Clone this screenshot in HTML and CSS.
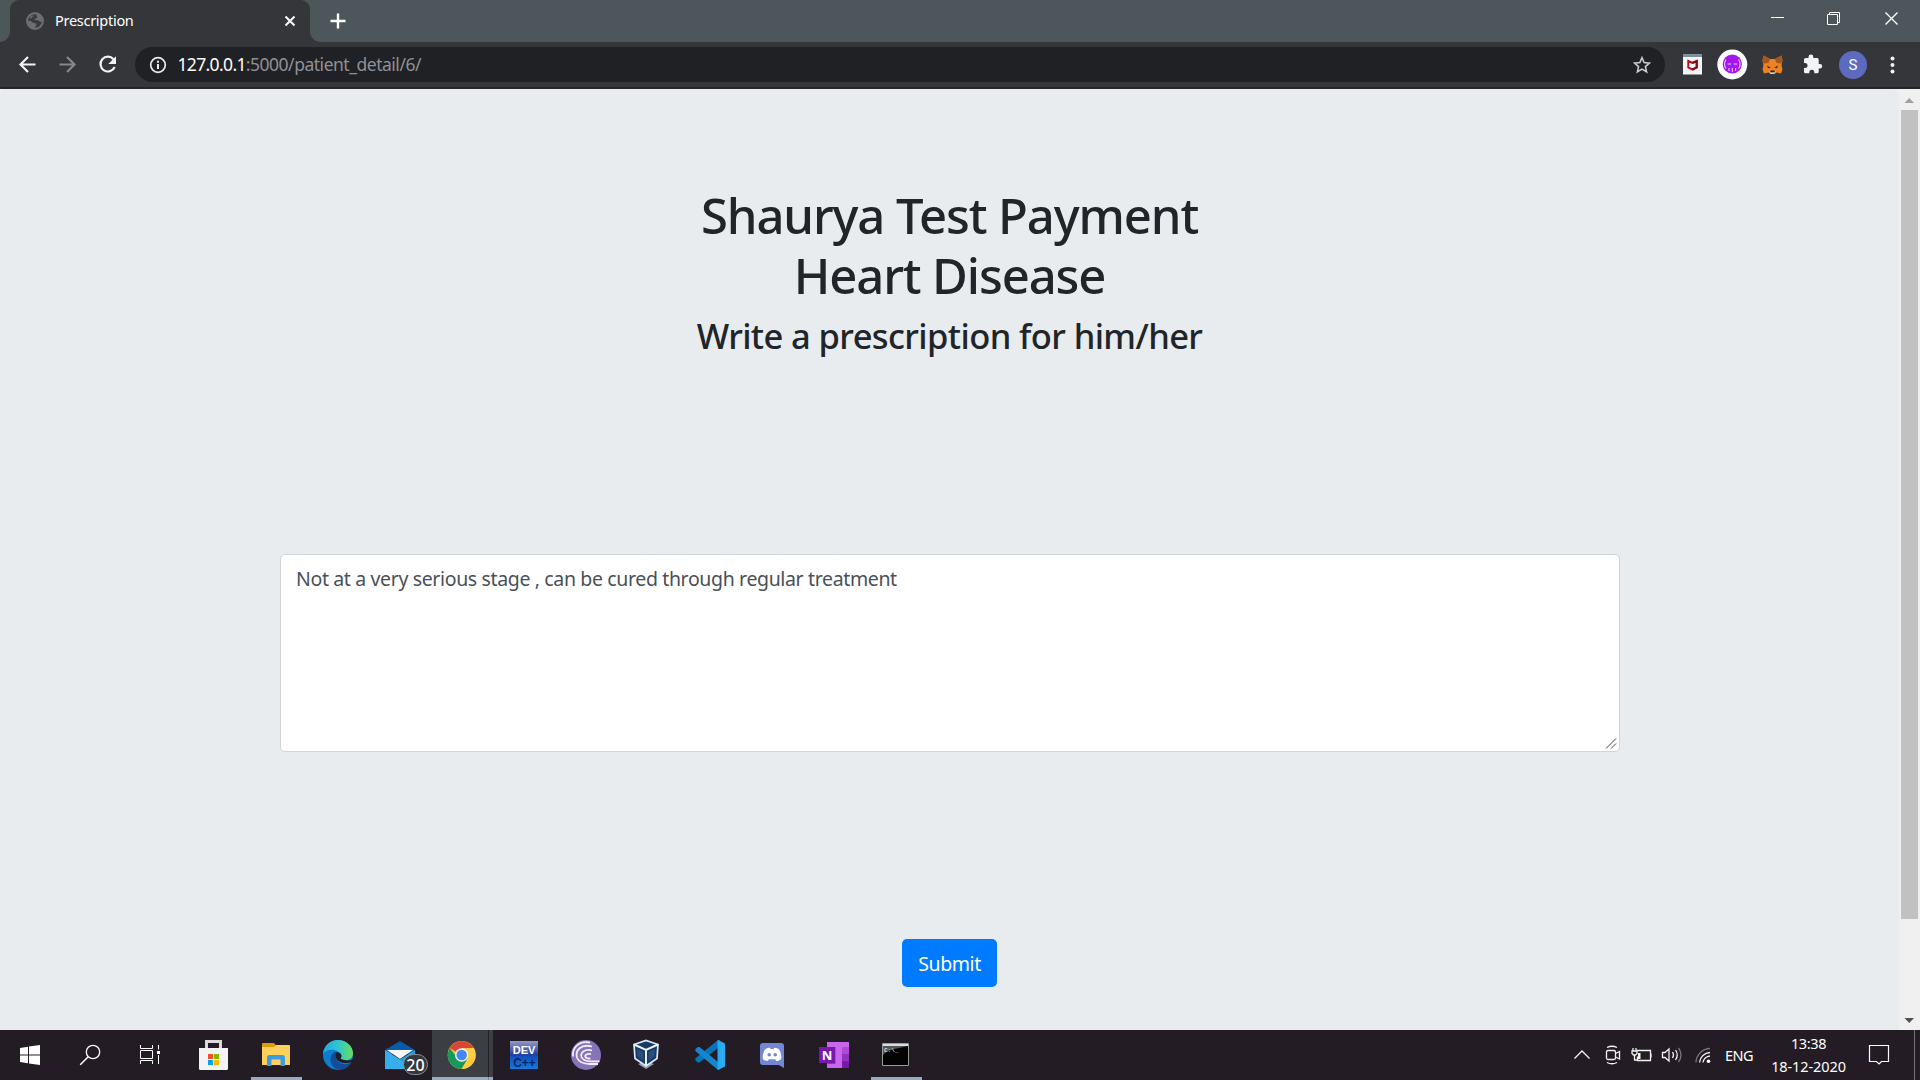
FILE: index.html
```html
<!DOCTYPE html>
<html lang="en">
<head>
<meta charset="utf-8">
<title>Prescription</title>
<link rel="stylesheet" href="styles.css">
</head>
<body>
<div class="desktop">
  <header class="tabstrip">
    <div class="tab">
      <svg class="globe" viewBox="0 0 18 18"><circle cx="9" cy="9" r="9" fill="#6a6d71"/><path d="M10.500 2.200C9.500 3.500 11.500 4 11 5.500S8.500 6 8.500 7.200s1.500 1 3.200 1c1.500 0 1.300 1.600 2.800 1.600h1.300c-.5 3.200-3.300 6-6.500 6v-1.600c1.200-.2 1.700-1.400.6-2.600-1-1-3.600-.4-4.300-1.800C5 8.500 3 8.600 2.200 9 2.200 5.500 5 2 10.500 2.200z" fill="#393a3e"/><path d="M4 6.500c1 .2 1.800-.2 2-1s1.500-.8 1.600-1.800L6 3.500 4.200 5z" fill="#6a6d71"/></svg>
      <span class="tab-title">Prescription</span>
      <svg class="tab-close" viewBox="0 0 12 12"><path d="M1.500 1.500l9 9m0-9l-9 9" stroke="#fff" stroke-width="2"/></svg>
    </div>
    <svg class="plus" viewBox="0 0 16 16"><path d="M8 .5v15M.5 8h15" stroke="#fff" stroke-width="2.400"/></svg>
    <svg class="window-controls" viewBox="1750 0 170 42" fill="none" stroke="#fff"><path d="M1771 17.500h13M1827.500 14.500h10v10h-10zM1829.500 14v-1.500h10v10H1838"/><path d="M1885.500 12.500l12 12m0-12l-12 12" stroke-width="1.400"/></svg>
  </header>

  <nav class="toolbar">
    <svg class="nav-icons" viewBox="0 42 135 45" fill="none" stroke-width="2.200">
      <path d="M35.500 64.500H20.500M28 57l-7.500 7.500L28 72" stroke="#f1f3f4"/>
      <path d="M59.500 64.500H74.500M67 57l7.500 7.500L67 72" stroke="#85878a"/>
      <path d="M113.500 59.200A7.400 7.400 0 1 0 114.700 67" stroke="#f1f3f4"/><path d="M116 56.300v7.700h-7.700z" fill="#f1f3f4"/>
    </svg>
    <div class="omnibox">
      <svg class="info" viewBox="0 0 18 18"><circle cx="9" cy="9" r="7.300" fill="none" stroke="#e8eaed" stroke-width="1.700"/><path d="M9 8v5M9 4.800v1.900" stroke="#e8eaed" stroke-width="2"/></svg>
      <span class="url"><span class="host">127.0.0.1</span><span class="path">:5000/patient_detail/6/</span></span>
      <svg class="star" viewBox="0 0 18 18"><path d="M9 1.700l2.150 4.900 5.250.5-3.950 3.500 1.150 5.200L9 13.100l-4.600 2.700 1.150-5.200L1.600 7.100l5.250-.5z" fill="none" stroke="#c9cbce" stroke-width="1.600"/></svg>
    </div>
    <svg class="extensions" viewBox="1665 42 255 45">
      <rect x="1683" y="54.500" width="19" height="20" fill="#f5f5f5"/><path d="M1683 54.500h19v2.500h-19z" fill="#78909c"/>
      <path d="M1688.300 61l4.200 2 4.200-2v6.500l-4.200 2.200-4.200-2.200z" fill="none" stroke="#c00d18" stroke-width="2"/><path d="M1692.500 63l4.200-2v6.500l-4.200 2.200" fill="none" stroke="#7f0915" stroke-width="2"/>
      <circle cx="1732.300" cy="64.500" r="15" fill="#fff"/><circle cx="1732.300" cy="64" r="9.600" fill="#a615ec"/>
      <path d="M1726 59.500q-3 5 0 9M1738.600 59.500q3 5 0 9M1727.500 64h3.500m2.600 0h3.500M1729 68v3m3.300-3v4m3.300-4v3" stroke="#e8c4ff" stroke-width="1.100" fill="none"/>
      <path d="M1763.500 55.500l6.500 3.500h5l6.500-3.500 1 5-1 5 1 4-1.500 4-4.500-1-2 1.500h-4l-2-1.500-4.500 1-1.500-4 1-4-1-5z" fill="#f0811f"/>
      <path d="M1763.500 55.500l6.500 3.800-1.500 3.700-5 .5-1-3zM1781.500 55.500l-6.500 3.800 1.500 3.700 5 .5 1-3z" fill="#a4581f"/>
      <path d="M1767 65.500l4 2.200-3 .6zM1778 65.500l-4 2.200 3 .6z" fill="#283447"/><path d="M1769 71h7l-1.500 3h-4z" fill="#d8c5ae"/><path d="M1770.500 70.500h4l.5 1.800h-5z" fill="#222"/>
      <path d="M1820 64h-1.300v-4.300a1.600 1.600 0 0 0-1.600-1.600h-3.800V57a2.400 2.400 0 0 0-4.800 0v1.100h-2.900a1.600 1.600 0 0 0-1.600 1.600v3.300h1a2.500 2.500 0 0 1 0 5h-1v3.700a1.600 1.600 0 0 0 1.600 1.600h3.700v-1a2.500 2.500 0 0 1 5 0v1h2.800a1.600 1.600 0 0 0 1.600-1.600v-3.300h1.300a2.200 2.200 0 0 0 0-4.400z" fill="#f1f3f4"/>
      <circle cx="1853" cy="65" r="14" fill="#5c6bc0"/><text x="1853" y="70.300" class="avatar-letter">S</text>
      <g fill="#f1f3f4"><circle cx="1892.500" cy="58.500" r="2"/><circle cx="1892.500" cy="65" r="2"/><circle cx="1892.500" cy="71.500" r="2"/></g>
    </svg>
  </nav>

  <div class="viewport">
    <main class="page">
      <h1>Shaurya Test Payment</h1>
      <h1>Heart Disease</h1>
      <h3>Write a prescription for him/her</h3>
      <div class="note">
        <span class="note-text">Not at a very serious stage , can be cured through regular treatment</span>
        <svg class="grip" viewBox="0 0 12 12"><path d="M1 11.500l10-10M6 11.500l5-5" stroke="#444"/></svg>
      </div>
      <button class="submit">Submit</button>
    </main>
    <aside class="scrollbar">
      <svg class="arrow" viewBox="0 0 21 21"><path d="M5.500 14h9.500l-4.750-5z" fill="#a0a0a0"/></svg>
      <div class="thumb"></div>
      <svg class="arrow" viewBox="0 0 21 21"><path d="M5.500 9h9.500l-4.750 5z" fill="#505050"/></svg>
    </aside>
  </div>

  <footer class="taskbar">
    <svg class="sys" viewBox="0 1030 182 50" fill="none" stroke="#fff">
      <path d="M20 1048l8-1.200v7.700h-8zM29 1046.600l11-1.600v9.500H29zM20 1055.500h8v7.700l-8-1.200zM29 1055.500h11v9.500l-11-1.600z" fill="#fff" stroke="none"/>
      <circle cx="93" cy="1052" r="6.700" stroke-width="1.300"/><path d="M88.200 1056.800l-8 8" stroke-width="1.500"/>
      <path d="M140.500 1045v3.500h12V1045M140.500 1064v-3.500h12v3.500M140.500 1050.500h12v8h-12zM158.500 1045v4.500M158.500 1055v9"/><path d="M157 1051h3v3h-3z" fill="#fff" stroke="none"/>
    </svg>
    <svg class="app" viewBox="182 1030 62 50">
      <path d="M206.500 1050v-8.500h14v8.500" fill="none" stroke="#ddd9dc" stroke-width="3"/><path d="M199 1048h29v20.500a1.500 1.500 0 0 1-1.500 1.500h-26a1.500 1.500 0 0 1-1.500-1.500z" fill="#f3f3f3"/>
      <path d="M208 1054h5v5h-5z" fill="#f25022"/><path d="M214 1054h5v5h-5z" fill="#7fba00"/><path d="M208 1060h5v5h-5z" fill="#00a4ef"/><path d="M214 1060h5v5h-5z" fill="#ffb900"/>
    </svg>
    <svg class="app" viewBox="244 1030 62 50">
      <path d="M262 1044a1 1 0 0 1 1-1h11l2 2.500v5h-14z" fill="#dc9a0c"/><path d="M262 1047h12l2-2h13a1 1 0 0 1 1 1v19h-28z" fill="#ffd15c"/>
      <path d="M267 1065.500v-8a2.500 2.500 0 0 1 2.500-2.500h13a2.500 2.500 0 0 1 2.500 2.500v8.500h-4.500v-6.500h-9v6.500H267z" fill="#3d9be0"/><path d="M251 1077h51v3h-51z" fill="#9aabbd"/>
    </svg>
    <svg class="app" viewBox="306 1030 62 50">
      <defs><linearGradient id="edgeTop"><stop offset="0" stop-color="#24a8dc"/><stop offset=".5" stop-color="#32c4d0"/><stop offset="1" stop-color="#68df5b"/></linearGradient></defs>
      <circle cx="338" cy="1055" r="15" fill="#0b7ed0"/>
      <path d="M323 1054C323.500 1046 330 1040 338 1040s15 6 15 13c0 5-3.500 7.300-7.500 7.300-3 0-5.200-1-4.600-2.300 1.400-2 .6-5-2.600-6.300-5-3.200-12-2.200-15.300 2.300z" fill="url(#edgeTop)"/>
      <path d="M335 1051.700c-6 3.300-6.500 12 0 16.500 6 3.700 13 .5 16.500-6.200-6 4.500-14 1.500-15.500-4-.6-2.500.5-4.600 2-5.600z" fill="#104c98"/>
      <path d="M337 1052c-2 2.500-2 6 1 8.500 4 3.300 10 3 14 1.200.8-.4 1.300.2.500 1.200 2-1 3-4 1.500-4.500-3 2.300-8 2.600-12.500.9-1.200-.5-.7-1.500-.3-2 1-2-.5-4.500-4.200-5.300z" fill="#241c24"/>
    </svg>
    <svg class="app" viewBox="368 1030 62 50">
      <path d="M385 1050l15-9 15 9v4h-30z" fill="#075bab"/><path d="M387 1050h26l-13 9z" fill="#f5f5f5"/><path d="M385 1050l15 9.500 15-9.500v19h-30z" fill="#229ee4"/><path d="M385 1050l29 19h-29z" fill="#35aeea"/>
      <rect x="403.500" y="1054.500" width="24" height="20" rx="10" fill="#32383d" stroke="#8e9193"/><text x="415.500" y="1070.500" class="badge">20</text>
    </svg>
    <svg class="app active" viewBox="430 1030 63 50">
      <path d="M432 1030h56v50h-56z" fill="#3b3f43"/><path d="M488 1030h1v50h-1z" fill="#202226"/><path d="M489 1030h4v50h-4z" fill="#3b3f43"/><path d="M432 1077h61v3h-61z" fill="#9aabbd"/><path d="M488 1077h1v3h-1z" fill="#778695"/>
      <circle cx="461.700" cy="1055" r="14" fill="#fbc934"/><path d="M461.700 1055l-12.100-7A14 14 0 0 1 473.800 1048z" fill="#db4437"/><path d="M449.600 1048a14 14 0 0 0 12.100 21l6.100-10.500-10.500-1z" fill="#16995a"/><path d="M461.700 1048h12.100a14 14 0 0 1-12.100 21l6.100-10.500z" fill="#ffcd42"/><circle cx="461.700" cy="1055" r="6.700" fill="#f1f1f1"/><circle cx="461.700" cy="1055" r="5.200" fill="#4285f4"/>
    </svg>
    <svg class="app" viewBox="493 1030 62 50">
      <defs><linearGradient id="devBg" x2="0" y2="1"><stop stop-color="#9298ca"/><stop offset=".5" stop-color="#243c9d"/><stop offset=".55" stop-color="#1450bd"/><stop offset="1" stop-color="#147bdc"/></linearGradient></defs>
      <path d="M510 1041h28v28h-28z" fill="url(#devBg)"/><text x="524" y="1053.500" class="dev">DEV</text><text x="524.500" y="1067" class="cpp">C++</text>
    </svg>
    <svg class="app" viewBox="555 1030 62 50">
      <circle cx="586" cy="1055" r="15" fill="#8574b8"/><g fill="none" stroke="#f2edfa" stroke-width="1.800"><path d="M592 1046.500c-11-3-17 4-15 11 2 5 7 6.500 13 6.500h8"/><path d="M592 1050.500c-7-2-12 2-10.500 6.500 1.500 3.500 5 4.300 9 4.300h9"/><path d="M591 1054c-4-.8-6.500 1-5.500 3 1 1.600 3 1.600 5 1.600"/><path d="M590 1042.500c-11-2-18 5-17 14"/></g>
    </svg>
    <svg class="app" viewBox="617 1030 62 50">
      <path d="M638 1064l8 5 8-5-8-3z" fill="#8c9db5"/><path d="M634 1044.500l12-4 12 4-1 14-11 7.500-11-7.500z" fill="#173a66" stroke="#dce8f3" stroke-width="1.700"/><path d="M634 1044.500l12 5.500 12-5.500M646 1050v15" fill="none" stroke="#edf5fb" stroke-width="2"/><path d="M637 1049l6.500 3v8.500l-6-4zM655 1049l-6.500 3v8.500l6-4z" fill="#274f80"/>
    </svg>
    <svg class="app" viewBox="679 1030 62 50">
      <path d="M718 1040l7 3.500v23l-7 3.500z" fill="#28adf3"/><path d="M718 1040v8l-18.500 14.500-1.700.1-2.500-2.300v-1.700z" fill="#0874b9"/><path d="M718 1070v-8l-18.500-15-1.700-.1-2.500 2.300v1.700z" fill="#1287cf"/><path d="M717.500 1040.500l2-.5v29.500h-2z" fill="#26a7ef"/>
    </svg>
    <svg class="app" viewBox="741 1030 62 50">
      <path d="M763 1043h18a3 3 0 0 1 3 3v22l-5-3h-16a3 3 0 0 1-3-3v-16a3 3 0 0 1 3-3z" fill="#7288d4"/><path d="M765 1049.500c2-1.600 4-1.800 5-1.800l.6 1.200h3l.6-1.200c2 0 4 .7 5 1.800 2 3.500 2.500 7 2 9.500-2 1.800-3.500 2-5 2l-1-1.700h-6.400l-1 1.700c-2 0-4-.8-5-2-.4-3 .5-7 2.200-9.500z" fill="#fff"/><circle cx="769.200" cy="1054.800" r="1.800" fill="#7288d4"/><circle cx="775.200" cy="1054.800" r="1.800" fill="#7288d4"/>
    </svg>
    <svg class="app" viewBox="803 1030 62 50">
      <path d="M827 1042h22v26h-22z" fill="#ca65ed"/><path d="M842 1047h7v7h-7z" fill="#ae4bd5"/><path d="M842 1054h7v7h-7z" fill="#9332bf"/><path d="M842 1061h7v7h-7z" fill="#7719aa"/><path d="M827 1047h8.500v17H827z" fill="#8f39b0"/><path d="M819 1047h16v16h-16z" fill="#7719aa"/><text x="827" y="1059.700" class="onenote">N</text>
    </svg>
    <svg class="app" viewBox="865 1030 62 50">
      <path d="M882.500 1043.500h26v22h-26z" fill="#030303" stroke="#9b9b9b"/><path d="M883 1044h25v2h-25z" fill="#d8dce0"/><path d="M883 1046h25c-8 2-20 3-25 9z" fill="#555"/><text x="884" y="1052" class="prompt">C:\_</text><path d="M871 1077h51v3h-51z" fill="#9aabbd"/>
    </svg>
    <svg class="tray-icons" viewBox="1564 1030 156 50" fill="none" stroke="#f2f2f2" stroke-width="1.300">
      <path d="M1574.500 1058.500l7.500-7.500 7.500 7.500"/>
      <rect x="1606.500" y="1050.500" width="9" height="9" rx="1.500"/><path d="M1615.500 1053.500l4-2v7.500l-4-2M1607 1047.500q5-2.500 10 0M1607 1062.500q5 2.500 10 0"/>
      <path d="M1637 1050.500h13.500v10h-13v-4M1651 1053.500v4"/><path d="M1638 1053h2.500v6h-2.500z" fill="#f2f2f2" stroke="none"/><path d="M1633 1048v3m3-3v3M1632 1051h5v2.500l-1.500 1.500h-2l-1.500-1.500zM1634.500 1055v5h3"/>
      <path d="M1662.500 1052.500h2.500l4-3.500v12l-4-3.500h-2.500zM1672.500 1052q2 3 0 6M1675.500 1050q3.500 5 0 10"/><path d="M1678.500 1048q5 7 0 14" stroke="#777"/>
      <path d="M1696 1062.500A14.500 14.500 0 0 1 1710 1048.500" stroke="#77727a"/><path d="M1699.500 1062.500A11 11 0 0 1 1710 1052.500M1703 1062.500A7.500 7.500 0 0 1 1710 1056"/><circle cx="1708.500" cy="1061.300" r="1.800" fill="#fff" stroke="none"/>
    </svg>
    <span class="lang">ENG</span>
    <div class="clock"><span class="time">13:38</span><span>18-12-2020</span></div>
    <svg class="notifications" viewBox="1859 1030 61 50" fill="none"><path d="M1869.500 1045.500h19v16h-7l-2.500 2.500-2.500-2.500h-7z" stroke="#fff" stroke-width="1.200"/><path d="M1914.500 1030v50" stroke="#777378"/></svg>
  </footer>
</div>
</body>
</html>
```
FILE: styles.css
```css
* { box-sizing: border-box; }
body { margin: 0; overflow: hidden; font-family: "Noto Sans", "Open Sans", sans-serif; }
svg { display: block; flex: none; }
.desktop { width: 1920px; height: 1080px; display: flex; flex-direction: column; }

.tabstrip { height: 42px; flex: none; background: #4d565b; display: flex; align-items: center; padding-left: 10px; }
.tab { position: relative; width: 300px; height: 42px; border-radius: 9px 9px 0 0; background: #35363a; display: flex; align-items: center; padding: 0 14px 0 16px; }
.tab::before, .tab::after { content: ""; position: absolute; bottom: 0; width: 10px; height: 10px; }
.tab::before { left: -10px; background: radial-gradient(circle at 0 0, transparent 9.5px, #35363a 10px); }
.tab::after { right: -10px; background: radial-gradient(circle at 100% 0, transparent 9.5px, #35363a 10px); }
.globe { width: 18px; height: 18px; }
.tab-title { flex: 1; margin-left: 11px; padding-bottom: 2px; font-size: 14.5px; line-height: 20px; letter-spacing: -.28px; color: #fff; }
.tab-close { width: 12px; height: 12px; }
.plus { width: 16px; height: 16px; margin-left: 19.5px; }
.window-controls { width: 170px; height: 42px; margin-left: auto; }

.toolbar { height: 47px; flex: none; background: #35363a; border-bottom: 2px solid #252628; display: flex; }
.nav-icons { width: 135px; height: 45px; }
.omnibox { width: 1530px; height: 35px; margin-top: 5px; border-radius: 18px; background: #202124; display: flex; align-items: center; padding: 0 14px 0 13.5px; }
.info { width: 18px; height: 18px; }
.url { flex: 1; margin-left: 11px; padding-bottom: 1px; font-size: 17.5px; line-height: 24px; }
.host { color: #fff; letter-spacing: -.65px; }
.path { color: #8e9195; letter-spacing: -.48px; }
.star { width: 18px; height: 18px; }
.extensions { width: 255px; height: 45px; }
.avatar-letter { font: 15px Roboto, sans-serif; fill: #fff; text-anchor: middle; }

.viewport { height: 941px; flex: none; display: flex; background: #f0f0f0; }
.page { width: 1899px; background: #e8ecef; border-radius: 6px 6px 0 0; padding-top: 96px; display: flex; flex-direction: column; align-items: center; color: #212529; }
h1, h3 { margin: 0; font-weight: 500; white-space: nowrap; }
h1 { font-size: 49px; line-height: 60px; letter-spacing: -1.1px; }
h3 { font-size: 34.5px; line-height: 42px; margin-top: 10px; letter-spacing: -.6px; }
.note { width: 1340px; height: 198px; margin-top: 197px; background: #fff; border: 1px solid #ced4da; border-radius: 5px; padding: 9px 2px 2px 15.5px; display: flex; justify-content: space-between; color: #495057; }
.note-text { font-size: 19.5px; line-height: 30px; letter-spacing: -.36px; white-space: nowrap; }
.grip { width: 12px; height: 12px; align-self: flex-end; }
.submit { width: 95px; height: 48px; margin-top: 187px; padding: 2px 0 0; border: 0; border-radius: 5px; background: #007bff; color: #fff; font: 19.5px/30px "Noto Sans", sans-serif; letter-spacing: -.4px; }
.scrollbar { width: 21px; display: flex; flex-direction: column; justify-content: space-between; }
.arrow { width: 21px; height: 21px; }
.thumb { width: 17px; height: 809px; margin: 0 2px auto; background: #c1c1c1; }

.taskbar { height: 50px; flex: none; display: flex; background: #241c24; color: #fff; }
.sys { width: 182px; height: 50px; }
.app { width: 62px; height: 50px; }
.active { width: 63px; }
.badge { font: 500 16px "Noto Sans", sans-serif; fill: #fff; text-anchor: middle; }
.dev { font: bold 11px/1 "Liberation Sans", sans-serif; fill: #fff; text-anchor: middle; }
.cpp { font: bold 12px/1 "Liberation Sans", sans-serif; fill: #07275c; text-anchor: middle; }
.onenote { font: bold 13px "Noto Sans", sans-serif; fill: #fff; text-anchor: middle; }
.prompt { font: bold 6px "Liberation Mono", monospace; fill: #ddd; }
.tray-icons { width: 156px; height: 50px; margin-left: auto; }
.lang { width: 41px; padding-left: 5px; font-size: 14.5px; line-height: 50px; letter-spacing: -.5px; }
.clock { width: 98px; display: flex; flex-direction: column; align-items: center; padding: 2px 3px 0 0; font-size: 14.5px; line-height: 23px; letter-spacing: -.1px; }
.time { letter-spacing: -.4px; }
.notifications { width: 61px; height: 50px; }
```
